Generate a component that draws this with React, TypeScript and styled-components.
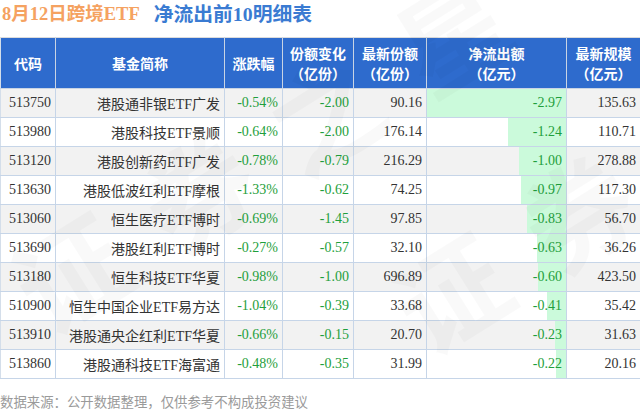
import styled, { createGlobalStyle } from 'styled-components';

const GlobalStyle = createGlobalStyle`
  html, body {
    margin: 0;
    padding: 0;
    background: #ffffff;
  }
  body {
    font-family: "Liberation Serif", "Noto Sans CJK SC", serif;
  }
`;

//#region layout
const Page = styled.div`
  position: relative;
  width: 640px;
  height: 410px;
  overflow: hidden;
  background: #ffffff;
`;

const Title = styled.div`
  display: flex;
  align-items: center;
  gap: 14px;
  height: 28px;
  padding-left: 2px;
  margin-bottom: 9px;
  font-family: "Liberation Serif", "Noto Sans CJK SC", serif;
  font-weight: 700;
  line-height: 28px;
`;

const TitlePart = styled.span<{ $tone: 'orange' | 'blue' }>`
  color: ${(p) => (p.$tone === 'orange' ? '#f5a261' : '#3a7bd2')};
  font-size: ${(p) => (p.$tone === 'orange' ? '18.5px' : '19.8px')};
`;

const Table = styled.table`
  width: 640px;
  border-collapse: collapse;
  table-layout: fixed;
  border-top: 1px solid #dcdcdc;
  border-left: 1px solid #d4deea;
`;

const HeadCell = styled.th`
  height: 50px;
  padding: 0 2px;
  background: #2e6bcd;
  color: #ffffff;
  font-family: "Noto Sans CJK SC", "Noto Sans", sans-serif;
  font-size: 14px;
  font-weight: 700;
  line-height: 20px;
  text-align: center;
  border-right: 1px solid #c9d4e4;
  border-bottom: 1px solid #c9d4e4;
`;

const Row = styled.tr<{ $shade: boolean }>`
  background: ${(p) => (p.$shade ? '#f2f2f2' : '#ffffff')};
`;

const Cell = styled.td<{ $align?: 'left' | 'right'; $tone?: 'green' | 'dark' }>`
  position: relative;
  height: 28px;
  padding: 0 4px 0 ${(p) => (p.$align === 'left' ? '8px' : '4px')};
  border-right: 1px solid #c6d5e8;
  border-bottom: 1px solid #c6d5e8;
  text-align: ${(p) => p.$align ?? 'right'};
  color: ${(p) => (p.$tone === 'green' ? '#1f9f3c' : '#333333')};
  font-size: 14px;
  white-space: nowrap;
`;

const Bar = styled.div`
  position: absolute;
  top: 0;
  right: 0;
  bottom: 0;
  background: #cbfadb;
`;

const CellText = styled.span`
  position: relative;
`;

const Footer = styled.div`
  margin-top: 13px;
  color: #9a9a9a;
  font-family: "Noto Sans CJK SC", "Noto Sans", sans-serif;
  font-size: 13.4px;
  line-height: 18px;
`;

const Watermark = styled.div<{ $x: number; $y: number }>`
  position: absolute;
  left: ${(p) => p.$x}px;
  top: ${(p) => p.$y}px;
  transform: rotate(-32deg);
  transform-origin: left top;
  font-family: "Noto Sans CJK SC", sans-serif;
  font-size: 110px;
  font-weight: 700;
  letter-spacing: 40px;
  color: rgba(0, 0, 0, 0.022);
  white-space: nowrap;
  pointer-events: none;
`;
//#endregion

const columns = [55, 169, 58, 71, 73, 140, 74];

const headers: string[][] = [
  ['代码'],
  ['基金简称'],
  ['涨跌幅'],
  ['份额变化', '（亿份）'],
  ['最新份额', '（亿份）'],
  ['净流出额', '（亿元）'],
  ['最新规模', '（亿元）'],
];

type Fund = [string, string, string, string, string, number, string];

const funds: Fund[] = [
  ['513750', '港股通非银ETF广发', '-0.54%', '-2.00', '90.16', -2.97, '135.63'],
  ['513980', '港股科技ETF景顺', '-0.64%', '-2.00', '176.14', -1.24, '110.71'],
  ['513120', '港股创新药ETF广发', '-0.78%', '-0.79', '216.29', -1.0, '278.88'],
  ['513630', '港股低波红利ETF摩根', '-1.33%', '-0.62', '74.25', -0.97, '117.30'],
  ['513060', '恒生医疗ETF博时', '-0.69%', '-1.45', '97.85', -0.83, '56.70'],
  ['513690', '港股红利ETF博时', '-0.27%', '-0.57', '32.10', -0.63, '36.26'],
  ['513180', '恒生科技ETF华夏', '-0.98%', '-1.00', '696.89', -0.6, '423.50'],
  ['510900', '恒生中国企业ETF易方达', '-1.04%', '-0.39', '33.68', -0.41, '35.42'],
  ['513910', '港股通央企红利ETF华夏', '-0.66%', '-0.15', '20.70', -0.23, '31.63'],
  ['513860', '港股通科技ETF海富通', '-0.48%', '-0.35', '31.99', -0.22, '20.16'],
];

const maxFlow = 2.97;

export default function App() {
  return (
    <Page>
      <GlobalStyle />
      <Title>
        <TitlePart $tone="orange">8月12日跨境ETF</TitlePart>
        <TitlePart $tone="blue">净流出前10明细表</TitlePart>
      </Title>
      <Table>
        <colgroup>
          {columns.map((w, i) => (
            <col key={i} style={{ width: w }} />
          ))}
        </colgroup>
        <thead>
          <tr>
            {headers.map((lines, i) => (
              <HeadCell key={i}>
                {lines.map((l, j) => (
                  <div key={j}>{l}</div>
                ))}
              </HeadCell>
            ))}
          </tr>
        </thead>
        <tbody>
          {funds.map((f, i) => (
            <Row key={f[0]} $shade={i % 2 === 0}>
              <Cell $align="left">{f[0]}</Cell>
              <Cell>{f[1]}</Cell>
              <Cell $tone="green">{f[2]}</Cell>
              <Cell $tone="green">{f[3]}</Cell>
              <Cell>{f[4]}</Cell>
              <Cell $tone="green">
                <Bar style={{ width: `${(Math.abs(f[5]) / maxFlow) * 100}%` }} />
                <CellText>{f[5].toFixed(2)}</CellText>
              </Cell>
              <Cell>{f[6]}</Cell>
            </Row>
          ))}
        </tbody>
      </Table>
      <Footer>数据来源：公开数据整理，仅供参考不构成投资建议</Footer>
      <Watermark $x={-20} $y={230}>证券之星</Watermark>
      <Watermark $x={360} $y={250}>证券之星</Watermark>
    </Page>
  );
}
